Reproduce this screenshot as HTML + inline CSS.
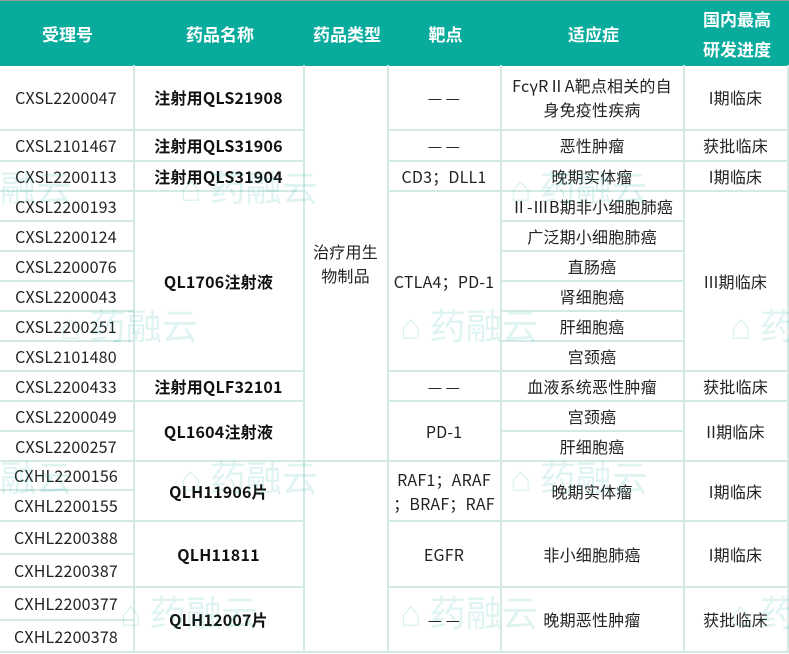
<!DOCTYPE html>
<html><head><meta charset="utf-8"><style>
body{margin:0;width:789px;height:654px;overflow:hidden;background:#fff;position:relative;font-family:"Liberation Sans","Noto Sans CJK SC",sans-serif;}
.c{position:absolute;box-sizing:border-box;border-right:2px solid #d3e9e4;border-bottom:2px solid #d3e9e4;display:flex;align-items:center;justify-content:center;text-align:center;font-size:16px;color:#222;line-height:24px;font-family:"Noto Sans CJK SC",sans-serif;letter-spacing:0.2px;}
.b{font-weight:bold;color:#111;}
.h{position:absolute;top:1px;height:65px;background:#09ab9d;color:#fff;font-weight:bold;font-size:17px;display:flex;align-items:center;justify-content:center;text-align:center;line-height:30px;font-family:"Noto Sans CJK SC",sans-serif;}
.wm{position:absolute;color:rgba(9,171,157,0.13);font-size:36px;font-family:"Noto Sans CJK SC",sans-serif;white-space:nowrap;pointer-events:none}
</style></head><body>
<div style="position:absolute;left:0;top:0;width:789px;height:1px;background:#999"></div>
<div class="h" style="left:0;width:135px">受理号</div>
<div class="h" style="left:135px;width:170px">药品名称</div>
<div class="h" style="left:305px;width:84px">药品类型</div>
<div class="h" style="left:389px;width:113px">靶点</div>
<div class="h" style="left:502px;width:183px">适应症</div>
<div class="h" style="left:685px;width:104px">国内最高<br>研发进度</div>
<div id="g"></div>
<div class="wm" style="left:180px;top:160px">⌂ 药融云</div>
<div class="wm" style="left:510px;top:160px">⌂ 药融云</div>
<div class="wm" style="left:0px;top:160px">融云</div>
<div class="wm" style="left:400px;top:298px">⌂ 药融云</div>
<div class="wm" style="left:730px;top:298px">⌂ 药</div>
<div class="wm" style="left:60px;top:298px">⌂ 药融云</div>
<div class="wm" style="left:180px;top:450px">⌂ 药融云</div>
<div class="wm" style="left:510px;top:450px">⌂ 药融云</div>
<div class="wm" style="left:0px;top:450px">融云</div>
<div class="wm" style="left:120px;top:585px">⌂ 药融云</div>
<div class="wm" style="left:400px;top:585px">⌂ 药融云</div>
<div class="wm" style="left:730px;top:585px">⌂ 药</div>
<script>
var Y=[66,131,162,192,222,252,282,312,342,372,402,432,462,491,522,555,588,621,653];
var X=[0,135,305,389,502,685,789];
var D="—&thinsp;—";
var ids=["CXSL2200047","CXSL2101467","CXSL2200113","CXSL2200193","CXSL2200124","CXSL2200076","CXSL2200043","CXSL2200251","CXSL2101480","CXSL2200433","CXSL2200049","CXSL2200257","CXHL2200156","CXHL2200155","CXHL2200388","CXHL2200387","CXHL2200377","CXHL2200378"];
var cols={
1:[[0,1,"注射用QLS21908",1],[1,2,"注射用QLS31906",1],[2,3,"注射用QLS31904",1],[3,9,"QL1706注射液",1],[9,10,"注射用QLF32101",1],[10,12,"QL1604注射液",1],[12,14,"QLH11906片",1],[14,16,"QLH11811",1],[16,18,"QLH12007片",1]],
2:[[0,12,"治疗用生<br>物制品"],[12,18,""]],
3:[[0,1,D],[1,2,D],[2,3,"CD3；DLL1"],[3,9,"CTLA4；PD-1"],[9,10,D],[10,12,"PD-1"],[12,14,"RAF1；ARAF<br>；BRAF；RAF"],[14,16,"EGFR"],[16,18,D]],
4:[[0,1,"FcγRⅡA靶点相关的自<br>身免疫性疾病"],[1,2,"恶性肿瘤"],[2,3,"晚期实体瘤"],[3,4,"Ⅱ-ⅢB期非小细胞肺癌"],[4,5,"广泛期小细胞肺癌"],[5,6,"直肠癌"],[6,7,"肾细胞癌"],[7,8,"肝细胞癌"],[8,9,"宫颈癌"],[9,10,"血液系统恶性肿瘤"],[10,11,"宫颈癌"],[11,12,"肝细胞癌"],[12,14,"晚期实体瘤"],[14,16,"非小细胞肺癌"],[16,18,"晚期恶性肿瘤"]],
5:[[0,1,"I期临床"],[1,2,"获批临床"],[2,3,"I期临床"],[3,9,"III期临床"],[9,10,"获批临床"],[10,12,"II期临床"],[12,14,"I期临床"],[14,16,"I期临床"],[16,18,"获批临床"]]
};
var h="";
function cell(c,a,b,t,bold,extra){h+='<div class="c'+(bold?' b':'')+'" style="left:'+(X[c]-1)+'px;top:'+(Y[a]-1)+'px;width:'+(X[c+1]-X[c]+1)+'px;height:'+(Y[b]-Y[a]+1)+'px;'+(extra||'')+'">'+t+'</div>';}
ids.forEach(function(t,i){cell(0,i,i+1,t,0);});
for(var c=1;c<=5;c++)cols[c].forEach(function(r){cell(c,r[0],r[1],r[2],r[3],(c==2&&r[0]==12)?'align-items:flex-start;padding-top:18px;':'');});
document.getElementById("g").outerHTML=h;
</script>
</body></html>
